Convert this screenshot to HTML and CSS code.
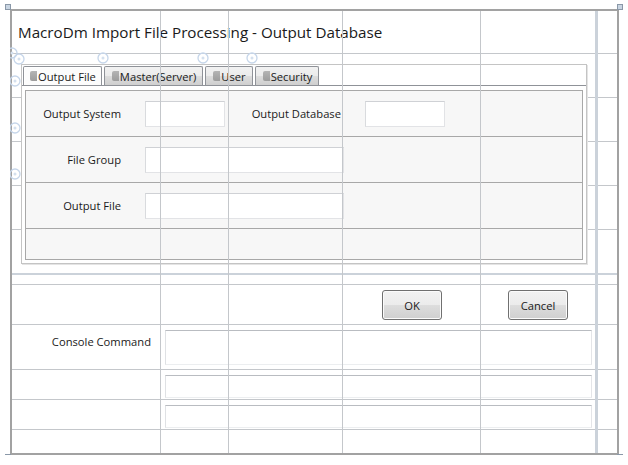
FILE: index.html
```html
<!DOCTYPE html>
<html>
<head>
<meta charset="utf-8">
<link rel="stylesheet" href="styles.css">
</head>
<body>
<div class="window">
  <svg class="grid-under" width="609" height="446" viewBox="0 0 609 446">
    <g class="thin">
      <line x1="2" y1="44.5" x2="607" y2="44.5"/>
      <line x1="2" y1="88.5" x2="607" y2="88.5"/>
      <line x1="2" y1="132.5" x2="607" y2="132.5"/>
      <line x1="2" y1="176.5" x2="607" y2="176.5"/>
      <line x1="2" y1="220.5" x2="607" y2="220.5"/>
      <line x1="2" y1="275.5" x2="607" y2="275.5"/>
      <line x1="2" y1="315.5" x2="607" y2="315.5"/>
      <line x1="2" y1="360.5" x2="607" y2="360.5"/>
      <line x1="2" y1="390.5" x2="607" y2="390.5"/>
      <line x1="2" y1="420.5" x2="607" y2="420.5"/>
    </g>
    <line class="thick" x1="2" y1="265" x2="607" y2="265"/>
  </svg>

  <div class="content">
    <div class="title">MacroDm Import File Processing - Output Database</div>

    <div class="frame">
      <div class="tabstrip">
        <div class="tab selected"><span class="ticon"></span>Output File</div>
        <div class="tab"><span class="ticon"></span>Master(Server)</div>
        <div class="tab"><span class="ticon"></span>User</div>
        <div class="tab"><span class="ticon"></span>Security</div>
      </div>
      <div class="tabpanel">
        <div class="inner">
          <div class="row">
            <span class="lbl">Output System</span>
            <div class="tb w80"></div>
            <span class="lbl lbl2">Output Database</span>
            <div class="tb w80"></div>
          </div>
          <div class="row">
            <span class="lbl">File Group</span>
            <div class="tb w199"></div>
          </div>
          <div class="row">
            <span class="lbl">Output File</span>
            <div class="tb w199"></div>
          </div>
          <div class="row last"></div>
        </div>
      </div>
    </div>

    <div class="actions">
      <button class="btn">OK</button>
      <button class="btn">Cancel</button>
    </div>

    <div class="console">
      <div class="crow big">
        <span class="clabel">Console Command</span>
        <div class="tb ctb"></div>
      </div>
      <div class="crow small first">
        <span></span>
        <div class="tb ctb"></div>
      </div>
      <div class="crow small second">
        <span></span>
        <div class="tb ctb"></div>
      </div>
    </div>
  </div>

  <svg class="grid-over" width="609" height="446" viewBox="0 0 609 446">
    <g class="thin">
      <line x1="150.5" y1="2" x2="150.5" y2="444"/>
      <line x1="218.5" y1="2" x2="218.5" y2="444"/>
      <line x1="332.5" y1="2" x2="332.5" y2="444"/>
      <line x1="470.5" y1="2" x2="470.5" y2="444"/>
    </g>
    <line class="thick" x1="586.5" y1="2" x2="586.5" y2="444"/>
    <g class="adorner">
      <circle cx="2" cy="44" r="5"/>
      <circle cx="9" cy="50" r="5"/>
      <circle cx="93" cy="49" r="5"/>
      <circle cx="193" cy="49" r="5"/>
      <circle cx="242" cy="49" r="5"/>
      <circle cx="5" cy="72" r="5"/>
      <circle cx="5" cy="119" r="5"/>
      <circle cx="5" cy="165" r="5"/>
    </g>
    <g class="adorner-dot">
      <circle cx="2" cy="44" r="1.5"/>
      <circle cx="9" cy="50" r="1.5"/>
      <circle cx="93" cy="49" r="1.5"/>
      <circle cx="193" cy="49" r="1.5"/>
      <circle cx="242" cy="49" r="1.5"/>
      <circle cx="5" cy="72" r="1.5"/>
      <circle cx="5" cy="119" r="1.5"/>
      <circle cx="5" cy="165" r="1.5"/>
    </g>
  </svg>

  <div class="handle h-tl"></div>
  <div class="handle h-tr"></div>
  <div class="handle h-bl"></div>
  <div class="handle h-br"></div>
</div>
</body>
</html>
```

FILE: styles.css
```css
body {
  margin: 0;
  padding: 9px 0 0 10px;
  background: #ffffff;
  font-family: "Open Sans", "Liberation Sans", sans-serif;
  font-size: 11.2px;
  color: #1a1a1a;
}

.window {
  position: relative;
  box-sizing: border-box;
  width: 609px;
  height: 446px;
  border: 2px solid #a2a2a2;
  background: #ffffff;
}

.grid-under,
.grid-over {
  position: absolute;
  left: -2px;
  top: -2px;
  pointer-events: none;
}

.grid-under { z-index: 0; }
.grid-over { z-index: 2; }

.thin line {
  stroke: #c4c7cb;
  stroke-width: 1;
}

.thick {
  stroke: #cbd2da;
  stroke-width: 2;
}

.grid-over .thick { stroke-width: 3; }

.adorner circle {
  fill: none;
  stroke: #c6d6ea;
  stroke-width: 1.3;
}

.adorner-dot circle {
  fill: #d4e0ee;
}

.content {
  position: relative;
  z-index: 1;
  display: flex;
  flex-direction: column;
}

.title {
  box-sizing: border-box;
  height: 42px;
  padding: 11px 0 0 6px;
  font-size: 15.2px;
  line-height: 20px;
  color: #1a1a1a;
}

.frame {
  box-sizing: border-box;
  width: 566px;
  height: 200px;
  margin: 11px 0 0 9px;
  border: 1px solid #c4c4c4;
  box-shadow: 1px 1px 0 #e4e4e4;
  background: #ffffff;
  display: flex;
  flex-direction: column;
}

.tabstrip {
  display: flex;
  gap: 2px;
  height: 20px;
  padding: 1px 0 0 1px;
  box-sizing: border-box;
}

.tab {
  box-sizing: border-box;
  height: 19px;
  display: flex;
  align-items: center;
  padding: 0 6px 0 7px;
  border: 1px solid #8f9298;
  border-bottom: none;
  border-radius: 2px 2px 0 0;
  background: linear-gradient(#f2f2f2 0%, #ebebeb 50%, #dddddd 51%, #cfcfcf 100%);
  line-height: 17px;
  white-space: nowrap;
}

.tab.selected {
  background: #fcfcfc;
  box-shadow: inset 1px 1px 0 #ffffff;
  padding: 0 5px 0 6px;
}

.ticon {
  width: 7px;
  height: 10px;
  margin-right: 1px;
  border-radius: 2px 0 0 2px;
  background: linear-gradient(#b4b4b4, #9c9c9c);
}

.tabpanel {
  flex: 1;
  border-top: 1px solid #8f9298;
  padding: 4px 3px 2px 3px;
}

.inner {
  height: 170px;
  box-sizing: border-box;
  border: 1px solid #a8a8a8;
  background: #f7f7f7;
  display: flex;
  flex-direction: column;
}

.row {
  height: 45px;
  border-bottom: 1px solid #a8a8a8;
  display: flex;
  align-items: center;
}

.row.last {
  height: 30px;
  border-bottom: none;
}

.lbl {
  width: 95px;
  text-align: right;
  flex: none;
}

.lbl2 {
  width: 92px;
  margin-left: 24px;
}

.tb {
  box-sizing: border-box;
  background: #ffffff;
  border: 1px solid #e2e3e6;
  border-top-color: #cfd1d5;
  border-left-color: #d9dbde;
  flex: none;
}

.row .tb {
  margin-left: 24px;
  height: 26px;
}

.w80 { width: 80px; }
.w199 { width: 199px; }

.actions {
  display: flex;
  gap: 66px;
  margin-top: 26px;
  padding-left: 370px;
}

.btn {
  box-sizing: border-box;
  width: 60px;
  height: 30px;
  padding: 0;
  border: 1px solid #707070;
  border-radius: 3px;
  background: linear-gradient(#f2f2f2 0%, #ebebeb 50%, #dddddd 51%, #cfcfcf 100%);
  font-family: "Open Sans", "Liberation Sans", sans-serif;
  font-size: 11.2px;
  color: #1a1a1a;
  box-shadow: inset 0 0 0 1px #fbfbfb;
}

.console {
  display: flex;
  flex-direction: column;
  margin-top: 10px;
}

.crow {
  display: grid;
  grid-template-columns: 139px 427px;
  column-gap: 14px;
}

.crow.big { height: 35px; }
.crow.small { height: 23px; }
.crow.first { margin-top: 10px; }
.crow.second { margin-top: 7px; }

.clabel {
  text-align: right;
  padding-top: 4px;
  line-height: 16px;
}

.ctb {
  border-color: #b9bcc1 #e4e5e8 #eceef0 #dfe1e4;
}

.handle {
  position: absolute;
  z-index: 3;
  width: 6px;
  height: 6px;
  box-sizing: border-box;
  border: 1px solid #8a98a8;
  background: #c9d5e2;
}

.h-tl { left: -7px; top: -7px; }
.h-tr { left: 605px; top: -7px; }
.h-bl { left: -7px; top: 443px; }
.h-br { left: 605px; top: 443px; }
```
